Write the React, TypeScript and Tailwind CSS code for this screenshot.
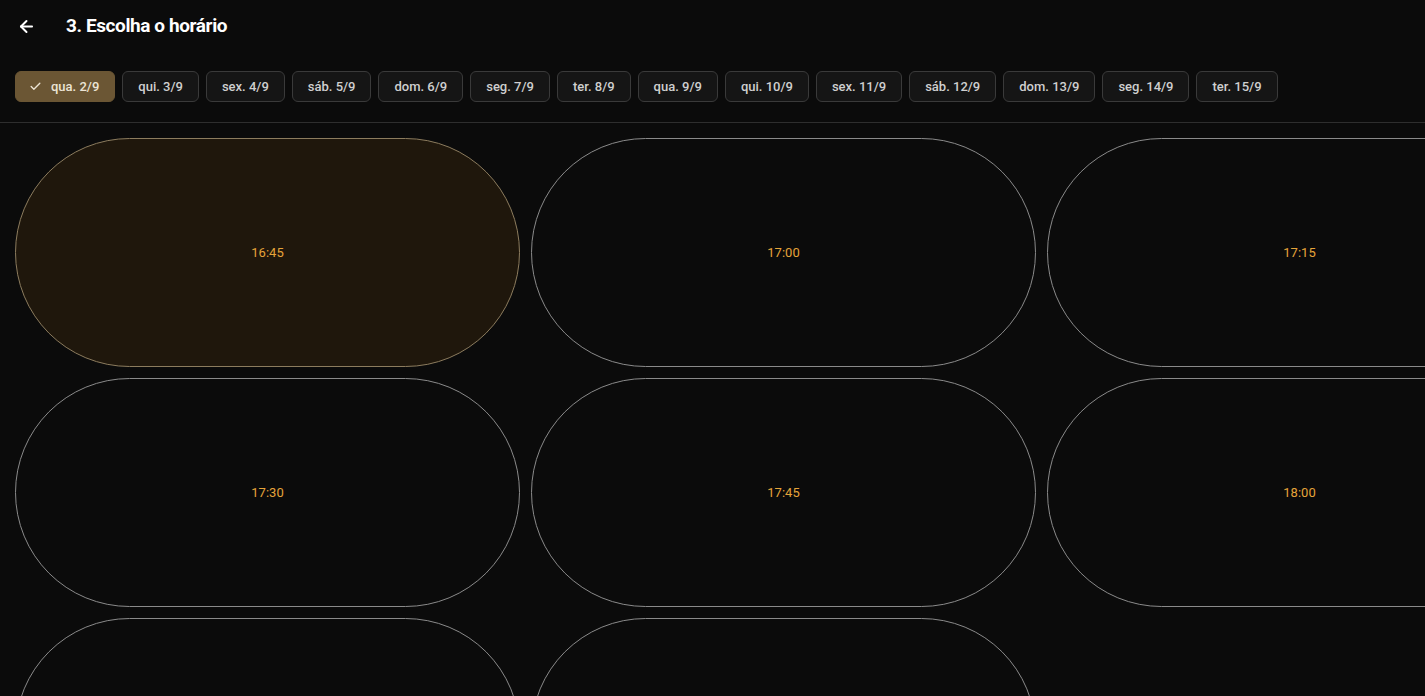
import React, { useState } from 'react';
import { ArrowLeft, Check } from 'lucide-react';

const days = [
  'qua. 2/9', 'qui. 3/9', 'sex. 4/9', 'sáb. 5/9', 'dom. 6/9', 'seg. 7/9', 'ter. 8/9',
  'qua. 9/9', 'qui. 10/9', 'sex. 11/9', 'sáb. 12/9', 'dom. 13/9', 'seg. 14/9', 'ter. 15/9',
];

const times = ['16:45', '17:00', '17:15', '17:30', '17:45', '18:00', '18:15', '18:30'];

const App: React.FC = () => {
  const [day, setDay] = useState(0);
  const [time, setTime] = useState('16:45');

  return (
    <div className="h-[696px] w-full overflow-hidden bg-[#0b0b0b] text-white" style={{ fontFamily: 'Roboto, "Noto Sans", sans-serif' }}>
      <div className="flex h-[52px] items-center pl-[16px]">
        <button className="flex h-[20px] w-[20px] items-center justify-center text-white">
          <ArrowLeft className="h-[19px] w-[19px]" strokeWidth={2.5} />
        </button>
        <h1 className="ml-[30px] text-[19px] font-bold tracking-[-0.4px] text-white">3. Escolha o horário</h1>
      </div>

      <div className="flex gap-[7px] px-[15px] pt-[19px] pb-[20px]">
        {days.map((d, i) => (
          <button
            key={d}
            onClick={() => setDay(i)}
            className={
              i === day
                ? 'flex h-[31px] items-center gap-[9px] rounded-md border border-[#6b5634] bg-[#6b5634] pl-[13px] pr-[15px] text-[13px] font-medium text-[#ece4d4]'
                : 'flex h-[31px] items-center rounded-md border border-[#3a3a3a] bg-[#151515] px-[15px] text-[13px] font-medium text-[#cfcfcf]'
            }
          >
            {i === day && <Check className="h-[13px] w-[13px]" strokeWidth={2.5} />}
            {d}
          </button>
        ))}
      </div>

      <div className="h-px bg-[#2e2e2e]" />

      <div className="grid grid-cols-[repeat(3,505px)] gap-x-[11px] gap-y-[11px] px-[15px] pt-[15px]">
        {times.map((t, i) => (
          <button
            key={t}
            onClick={() => setTime(t)}
            className={
              t === time
                ? 'flex h-[229px] items-center justify-center rounded-full border border-[#8c7c5e] bg-[#1f170c] text-[13px] text-[#e5a43a]'
                : 'flex h-[229px] items-center justify-center rounded-full border border-[#8a8a8a] bg-[#0b0b0b] text-[13px] text-[#e5a43a]'
            }
          >
            {i < 6 ? t : null}
          </button>
        ))}
      </div>
    </div>
  );
};

export default App;
